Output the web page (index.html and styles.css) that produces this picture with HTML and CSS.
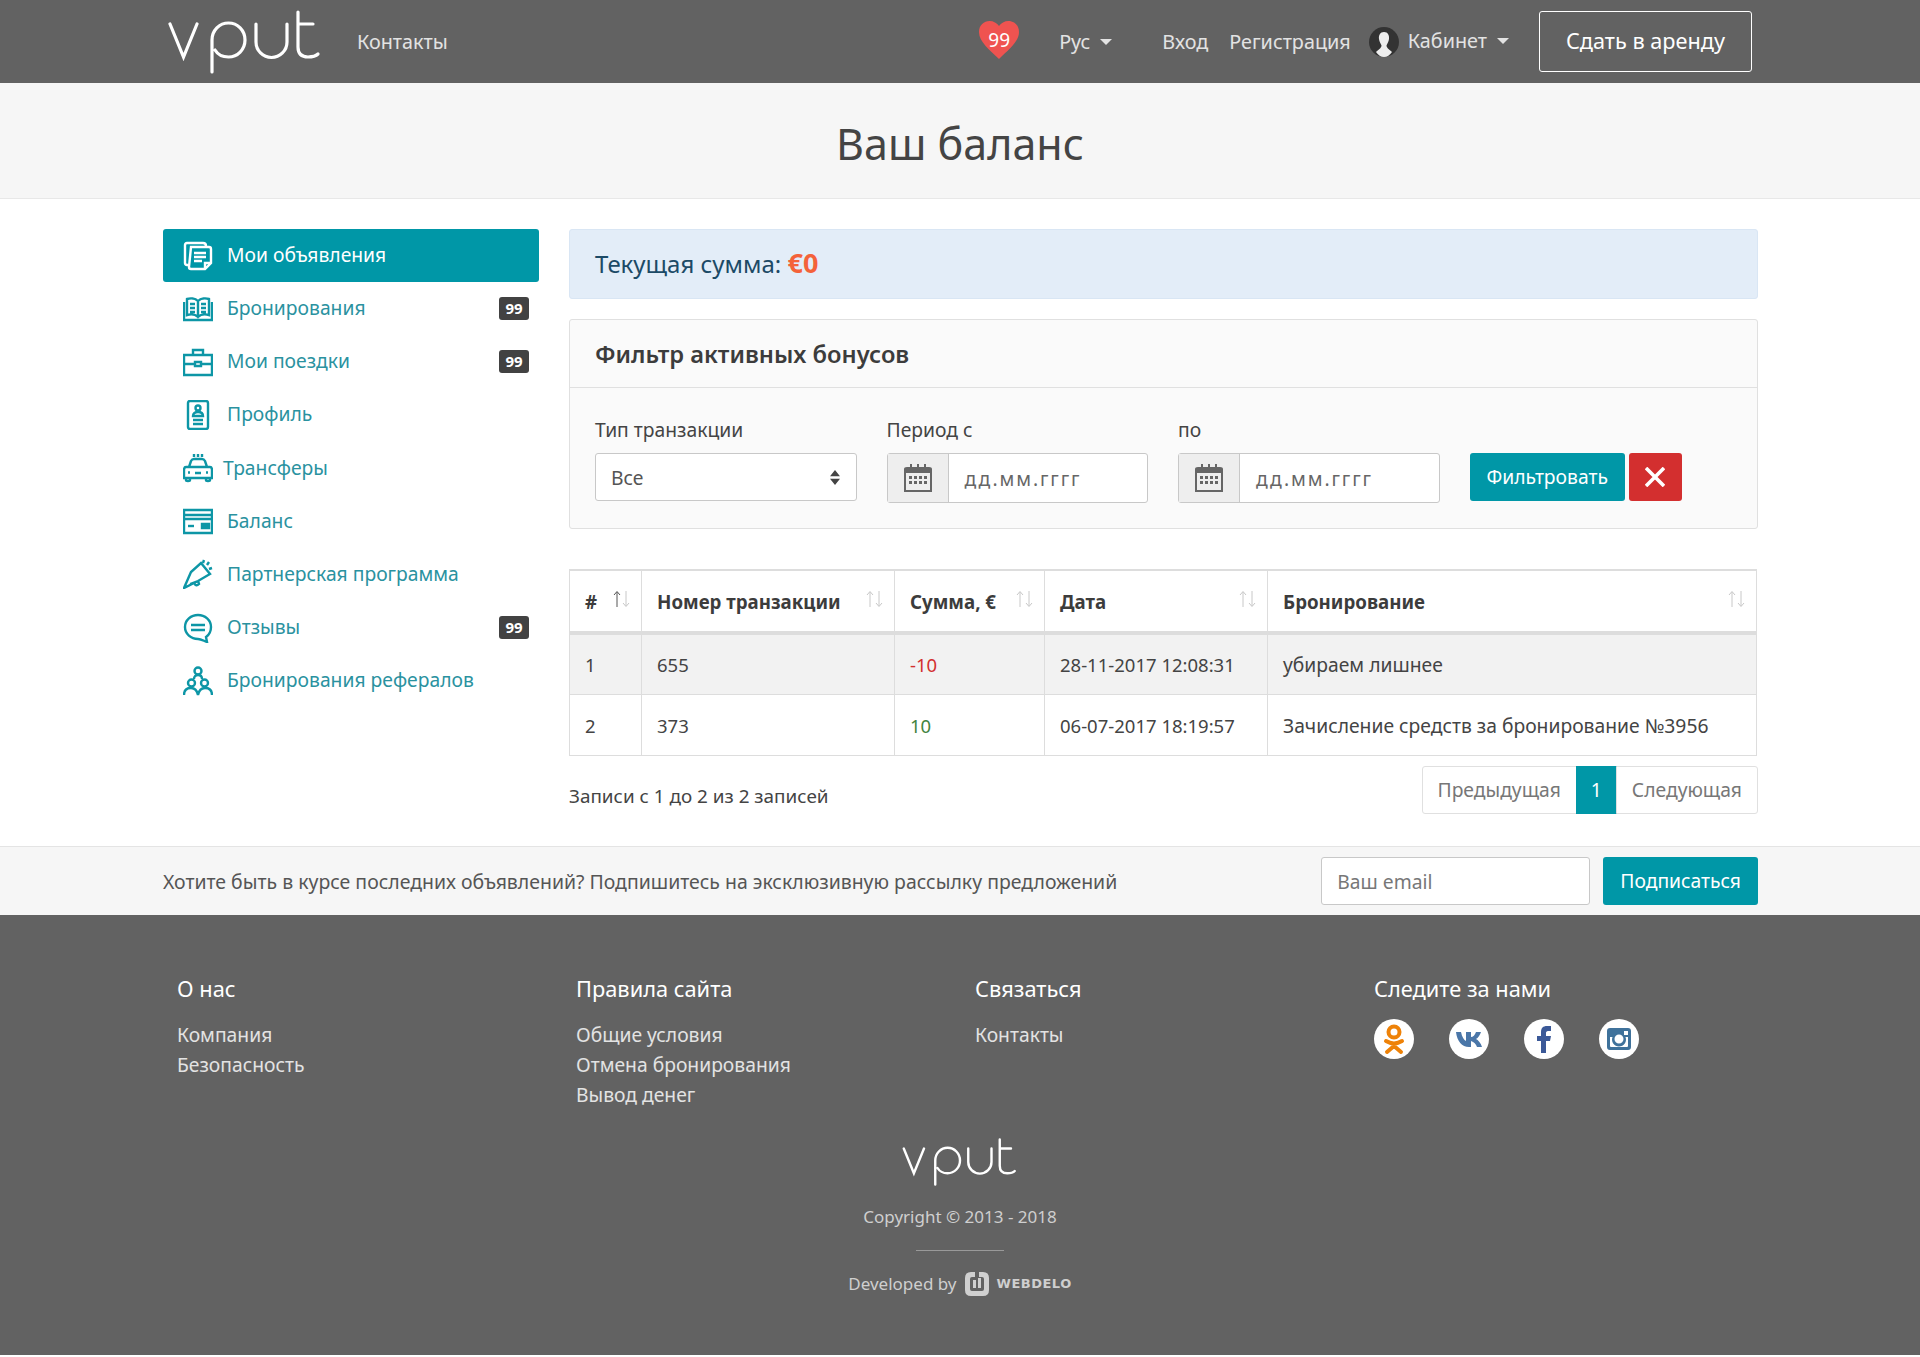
FILE: index.html
```html
<!DOCTYPE html>
<html lang="ru">
<head>
<meta charset="UTF-8">
<title>Ваш баланс</title>
<link rel="stylesheet" href="styles.css">
</head>
<body>

<svg class="sprite" width="0" height="0">
  <symbol id="logo" viewBox="0 0 154 64">
    <g fill="none" stroke="currentColor" stroke-width="3.2" stroke-linecap="round">
      <path d="M2 14 L15.500 47 L29 14"/>
      <path d="M44 62 V30 A16.500 17 0 1 1 60.500 47 C54 47 50 45 47 40"/>
      <path d="M88 14 V32 A15.500 15.500 0 0 0 119 32 V14"/>
      <path d="M130 2 V37 C130 44 134 47 140 47 C144 47 147 47 150 44 M130 14 H145"/>
    </g>
  </symbol>
  <symbol id="cal" viewBox="0 0 30 28">
    <path fill="#666" d="M4 3 H7 V0 H9 V3 H14 V0 H16 V3 H21 V0 H23 V3 H26 Q29 3 29 5 V28 H1 V5 Q1 3 4 3 Z M3 9 V26 H27 V9 Z"/>
    <path fill="#666" d="M6 12 H9 V15 H6 Z M11 12 H14 V15 H11 Z M16 12 H19 V15 H16 Z M21 12 H24 V15 H21 Z M6 17 H9 V20 H6 Z M11 17 H14 V20 H11 Z M16 17 H19 V20 H16 Z M21 17 H24 V20 H21 Z"/>
  </symbol>
  <symbol id="sort" viewBox="0 0 20 18">
    <path class="up" d="M5 17 V2 M2 5 L5 1.500 L8 5" fill="none" stroke="currentColor"/>
    <path d="M14 1 V16 M11 13 L14 16.500 L17 13" fill="none" stroke="#c8c8c8"/>
  </symbol>
</svg>

<header class="topbar">
  <div class="wrap topbar-in">
    <svg class="logo"><use href="#logo"/></svg>
    <a class="nav-link contacts">Контакты</a>
    <div class="heart">
      <svg viewBox="0 0 42 38" width="42" height="38"><path d="M21 38 C12 29 1 21 1 11 C1 4 6 0 11.500 0 C15.500 0 19 2 21 5 C23 2 26.500 0 30.500 0 C36 0 41 4 41 11 C41 21 30 29 21 38 Z" fill="#ef5350"/></svg>
      <span>99</span>
    </div>
    <a class="nav-link lang">Рус<i class="caret"></i></a>
    <a class="nav-link login">Вход</a>
    <a class="nav-link register">Регистрация</a>
    <svg class="avatar" viewBox="0 0 30 30" width="30" height="30">
      <circle cx="15" cy="15" r="15" fill="#333"/>
      <path d="M15 5 C19 5 20.500 8.500 20 12 C19.700 15 18 17 17.500 18.500 C17.500 21 21 23 23 25 C21 28 18 30 15 30 C12 30 9 28 7 25 C9 23 12.500 21 12.500 18.500 C12 17 10.300 15 10 12 C9.500 8.500 11 5 15 5 Z" fill="#eee"/>
    </svg>
    <a class="nav-link cabinet">Кабинет<i class="caret"></i></a>
    <a class="rent-btn">Сдать в аренду</a>
  </div>
</header>

<div class="title-band">
  <h1>Ваш баланс</h1>
</div>

<div class="wrap content">
  <nav class="side">
    <a class="side-item active">
      <svg class="ico" viewBox="0 0 30 30"><path d="M6 24 H4 Q2 24 2 22 V4 Q2 2 4 2 H20 Q23 2 23 5 M8 6 H26 Q28 6 28 8 V22 L22 28 H8 Q6 28 6 26 Z M22 28 V22 H28 M11 12 H23 M11 16 H23 M11 20 H19"/></svg>
      Мои объявления
    </a>
    <a class="side-item">
      <svg class="ico" viewBox="0 0 30 30"><path d="M15 7 C12 4 7 4 4 5 V21 C7 20 12 20 15 23 C18 20 23 20 26 21 V5 C23 4 18 4 15 7 Z M15 7 V23 M1 8 V26 H29 V8 M7 10 H12 M7 14 H12 M7 18 H12 M18 10 H23 M18 14 H23 M18 18 H23"/></svg>
      Бронирования<span class="count">99</span>
    </a>
    <a class="side-item">
      <svg class="ico" viewBox="0 0 30 30"><path d="M1 8 H29 V28 H1 Z M10 8 V3 H20 V8 M1 17 H12 M18 17 H29 M12 15 H18 V19 H12 Z"/></svg>
      Мои поездки<span class="count">99</span>
    </a>
    <a class="side-item">
      <svg class="ico" viewBox="0 0 30 30"><path d="M7 1 H23 Q25 1 25 3 V27 Q25 29 23 29 H7 Q5 29 5 27 V3 Q5 1 7 1 Z M10 16 C10 13 12 12 15 12 C18 12 20 13 20 16 Z M10 20 H20 M10 24 H20"/><circle cx="15" cy="8" r="2.500"/></svg>
      Профиль
    </a>
    <a class="side-item taxi">
      <svg class="ico" viewBox="0 0 30 30"><path d="M6 14 L8 8 Q9 6 11 6 H19 Q21 6 22 8 L24 14 M3 14 H27 Q29 14 29 17 V25 H1 V17 Q1 14 3 14 Z M3 25 V27 Q3 28 5 28 Q7 28 7 27 V25 M23 25 V27 Q23 28 25 28 Q27 28 27 27 V25 M5 19.500 H7 M23 19.500 H25 M12 20 H18 M11 1 V4 M15 1 V4 M19 1 V4"/></svg>
      Трансферы
    </a>
    <a class="side-item">
      <svg class="ico" viewBox="0 0 30 30"><path d="M1 4 H29 V27 H1 Z M1 9 H29 M1 13 H29"/><path class="fill" d="M19 18 H26 V22 H19 Z"/><path d="M5 20 H11"/></svg>
      Баланс
    </a>
    <a class="side-item">
      <svg class="ico" viewBox="0 0 30 30"><path d="M1 29 L8 13 L18 4 L27 15 L15 22 Z M7 25 L15 22 M11 24 Q13 28 16 25 L15 22 M20 4 L21 1 M24 6 L26 3 M26 10 L29 9"/></svg>
      Партнерская программа
    </a>
    <a class="side-item">
      <svg class="ico" viewBox="0 0 30 30"><path d="M15 2 C8 2 2 7 2 14 C2 21 8 26 15 26 C18 26 21 28 24 29 L23 24 C26 22 28 18 28 14 C28 7 22 2 15 2 Z M8 12 H22 M8 17 H22"/></svg>
      Отзывы<span class="count">99</span>
    </a>
    <a class="side-item">
      <svg class="ico" viewBox="0 0 30 30"><circle cx="15" cy="5" r="3.500"/><circle cx="8.500" cy="17" r="3.500"/><circle cx="21.500" cy="17" r="3.500"/><path d="M11 13 C11 10.500 12.500 9 15 9 C17.500 9 19 10.500 19 13 M1 29 C1 24 4 22 8 22 C12 22 14 24 15 29 C16 24 18 22 22 22 C26 22 29 24 29 29"/></svg>
      Бронирования рефералов
    </a>
  </nav>

  <main class="main">
    <div class="sum-box">Текущая сумма: <b>€0</b></div>

    <section class="card">
      <h2 class="card-head">Фильтр активных бонусов</h2>
      <form class="filter">
        <div class="field">
          <label>Тип транзакции</label>
          <div class="select">Все
            <svg viewBox="0 0 8 12" width="10" height="15"><path d="M4 0 L8 5 H0 Z M0 7 H8 L4 12 Z" fill="#444"/></svg>
          </div>
        </div>
        <div class="field">
          <label>Период с</label>
          <div class="date">
            <span class="date-ico"><svg width="30" height="28"><use href="#cal"/></svg></span>
            <span class="date-val">дд.мм.гггг</span>
          </div>
        </div>
        <div class="field">
          <label>по</label>
          <div class="date">
            <span class="date-ico"><svg width="30" height="28"><use href="#cal"/></svg></span>
            <span class="date-val">дд.мм.гггг</span>
          </div>
        </div>
        <div class="filter-btns">
          <a class="btn">Фильтровать</a>
          <a class="btn-x"><svg viewBox="0 0 20 20" width="20" height="20"><path d="M1 1 L19 19 M19 1 L1 19" stroke="#fff" stroke-width="3.600"/></svg></a>
        </div>
      </form>
    </section>

    <table class="tbl">
      <thead>
        <tr>
          <th class="c1"># <svg class="sort active-sort"><use href="#sort"/></svg></th>
          <th class="c2">Номер транзакции <svg class="sort"><use href="#sort"/></svg></th>
          <th class="c3">Сумма, € <svg class="sort"><use href="#sort"/></svg></th>
          <th class="c4">Дата <svg class="sort"><use href="#sort"/></svg></th>
          <th>Бронирование <svg class="sort"><use href="#sort"/></svg></th>
        </tr>
      </thead>
      <tbody>
        <tr class="odd">
          <td class="num">1</td><td class="num">655</td><td class="num minus">-10</td><td class="num">28-11-2017 12:08:31</td><td>убираем лишнее</td>
        </tr>
        <tr>
          <td class="num">2</td><td class="num">373</td><td class="num plus">10</td><td class="num">06-07-2017 18:19:57</td><td>Зачисление средств за бронирование №3956</td>
        </tr>
      </tbody>
    </table>

    <div class="tbl-foot">
      <span class="info">Записи с 1 до 2 из 2 записей</span>
      <div class="pager">
        <a>Предыдущая</a><a class="cur">1</a><a>Следующая</a>
      </div>
    </div>
  </main>
</div>

<div class="subscribe">
  <div class="wrap subscribe-in">
    <span class="sub-text">Хотите быть в курсе последних объявлений? Подпишитесь на эксклюзивную рассылку предложений</span>
    <span class="sub-input">Ваш email</span>
    <a class="btn sub-btn">Подписаться</a>
  </div>
</div>

<footer class="footer">
  <div class="wrap foot-cols">
    <div class="foot-col">
      <h4>О нас</h4>
      <a>Компания</a>
      <a>Безопасность</a>
    </div>
    <div class="foot-col">
      <h4>Правила сайта</h4>
      <a>Общие условия</a>
      <a>Отмена бронирования</a>
      <a>Вывод денег</a>
    </div>
    <div class="foot-col">
      <h4>Связаться</h4>
      <a>Контакты</a>
    </div>
    <div class="foot-col">
      <h4>Следите за нами</h4>
      <div class="socials">
        <svg viewBox="0 0 40 40" width="40" height="40"><circle cx="20" cy="20" r="20" fill="#fff"/><g fill="none" stroke="#ee8208" stroke-width="4" stroke-linecap="round"><circle cx="20" cy="13" r="5.500"/><path d="M12 22 C17 25 23 25 28 22 M20 25 V27 M20 27 L13 33 M20 27 L27 33"/></g></svg>
        <svg viewBox="0 0 40 40" width="40" height="40"><circle cx="20" cy="20" r="20" fill="#fff"/><path fill="#4a76a8" d="M7 13 H12 C13 18 15 21 17 22 V13 H22 V18 C24 18 26 16 27 13 H32 C31 16 29 19 27 20 C29 21 32 24 33 28 H28 C27 25 25 23 22 22 V28 H20 C13 28 8 22 7 13 Z"/></svg>
        <svg viewBox="0 0 40 40" width="40" height="40"><circle cx="20" cy="20" r="20" fill="#fff"/><path fill="#3b5998" d="M17 34 V22 H13 V17 H17 V13 C17 9 19 7 23 7 H27 V12 H24 C22.500 12 22 13 22 14 V17 H27 L26 22 H22 V34 Z"/></svg>
        <svg viewBox="0 0 40 40" width="40" height="40"><circle cx="20" cy="20" r="20" fill="#fff"/><path fill="#3f729b" fill-rule="evenodd" d="M11 9 H29 Q32 9 32 12 V28 Q32 31 29 31 H11 Q8 31 8 28 V12 Q8 9 11 9 Z M11 18 V27 Q11 28 12 28 H28 Q29 28 29 27 V18 H26.500 A7 7 0 1 1 13.500 18 Z M20 15.500 A4.500 4.500 0 1 0 20 24.500 A4.500 4.500 0 1 0 20 15.500 Z M25 12 V16 H29 V12 Z"/></svg>
      </div>
    </div>
  </div>
  <div class="foot-bottom">
    <svg class="logo-small"><use href="#logo"/></svg>
    <div class="copy">Copyright © 2013 - 2018</div>
    <div class="foot-line"></div>
    <div class="dev">Developed by
      <svg viewBox="0 0 26 26" width="26" height="26"><path fill="#d0d0d0" fill-rule="evenodd" d="M7 1 H11 V6 H8 Q6 6 6 8 V18 Q6 20 8 20 H18 Q20 20 20 18 V8 Q20 6 18 6 H15 V1 H19 Q25 1 25 7 V19 Q25 25 19 25 H7 Q1 25 1 19 V7 Q1 1 7 1 Z M9 9 H12 V17 H9 Z M14 7 H17 V17 H14 Z"/></svg>
      <b>WEBDELO</b>
    </div>
  </div>
</footer>

</body>
</html>
```

FILE: styles.css
```css
* {
  box-sizing: border-box;
}

body {
  margin: 0;
  font-family: "Noto Sans", sans-serif;
  font-size: 19.3px;
  line-height: 25px;
  color: #444;
  background: #fff;
}

.sprite {
  position: absolute;
}

.wrap {
  width: 1595px;
  margin: 0 0 0 163px;
}

/* шапка */
.topbar {
  height: 83px;
  background: #626262;
}

.topbar-in {
  display: flex;
  align-items: center;
  height: 83px;
}

.logo {
  flex: none;
  width: 154px;
  height: 64px;
  margin: 0 0 0 5px;
  color: #fff;
}

.nav-link {
  color: #e3e3e3;
  font-size: 19.8px;
  white-space: nowrap;
}

.contacts {
  margin-left: 35px;
}

.heart {
  position: relative;
  width: 42px;
  height: 38px;
  margin: -4px 0 0 auto;
}

.heart span {
  position: absolute;
  left: 0;
  right: 0;
  top: 7px;
  text-align: center;
  color: #fff;
  font-size: 19px;
}

.lang {
  margin-left: 39px;
}

.caret {
  display: inline-block;
  margin-left: 10px;
  vertical-align: 4px;
  border-top: 6px solid #e3e3e3;
  border-left: 6px solid transparent;
  border-right: 6px solid transparent;
}

.login {
  margin-left: 50px;
}

.register {
  margin-left: 21px;
}

.avatar {
  margin-left: 18px;
}

.cabinet {
  margin: -3px 0 0 9px;
}

.rent-btn {
  margin: 0 6px 0 30px;
  width: 213px;
  height: 61px;
  line-height: 58px;
  text-align: center;
  border: 1px solid #fff;
  border-radius: 3px;
  color: #fff;
  font-size: 21.7px;
  white-space: nowrap;
}

.title-band {
  height: 116px;
  background: #f6f6f6;
  border-bottom: 1px solid #e8e8e8;
}

h1 {
  margin: 0;
  text-align: center;
  font-size: 43px;
  font-weight: 400;
  line-height: 121px;
  color: #444;
}

/* боковое меню */
.content {
  display: flex;
  gap: 30px;
  padding-top: 30px;
}

.side {
  flex: 0 0 376px;
}

.side-item {
  display: flex;
  align-items: center;
  height: 53.150px;
  padding: 0 10px 2px 20px;
  color: #2a929f;
  white-space: nowrap;
}

.side-item.active {
  background: #0097a7;
  border-radius: 3px;
  color: #fff;
}

.ico {
  flex: none;
  width: 30px;
  height: 30px;
  margin: 2px 14px 0 0;
  fill: none;
  stroke: #0d96a6;
  stroke-width: 2.400;
}

.active .ico {
  stroke: #fff;
}

.ico .fill {
  fill: #0d96a6;
}

.taxi .ico {
  margin-right: 10px;
}

.count {
  margin: 2px 0 0 auto;
  width: 30px;
  height: 23px;
  border-radius: 3px;
  background: #424242;
  color: #fff;
  font-size: 15px;
  font-weight: 700;
  line-height: 23px;
  text-align: center;
}

/* основная колонка */
.main {
  flex: 1;
  min-width: 0;
}

.sum-box {
  height: 70px;
  padding: 0 25px;
  background: #e3edf8;
  border: 1px solid #d9e6f4;
  border-radius: 3px;
  font-size: 24px;
  line-height: 66px;
  color: #1c4a66;
}

.sum-box b {
  font-size: 27px;
  color: #f4623a;
}

.card {
  margin-top: 20px;
  height: 210px;
  background: #fafafa;
  border: 1px solid #e0e0e0;
  border-radius: 3px;
}

.card-head {
  margin: 0;
  height: 68px;
  padding: 0 25px;
  border-bottom: 1px solid #e0e0e0;
  font-size: 23.700px;
  font-weight: 600;
  line-height: 68px;
  color: #3c3c3c;
}

.filter {
  display: flex;
  align-items: flex-start;
  gap: 30px;
  padding: 28px 25px 0;
}

.field {
  width: 261.500px;
}

.field label {
  display: block;
  height: 37px;
  line-height: 27px;
}

.select {
  display: flex;
  align-items: center;
  justify-content: space-between;
  height: 48px;
  padding: 0 16px 0 15px;
  background: #fff;
  border: 1px solid #c8c8c8;
  border-radius: 3px;
  color: #555;
}

.date {
  display: flex;
  height: 50px;
  background: #fff;
  border: 1px solid #c8c8c8;
  border-radius: 3px;
}

.date-ico {
  display: flex;
  align-items: center;
  justify-content: center;
  width: 61px;
  background: #eee;
  border-right: 1px solid #c8c8c8;
}

.date-val {
  padding-left: 16px;
  line-height: 50px;
  color: #666;
  letter-spacing: 1.900px;
}

.filter-btns {
  display: flex;
  gap: 4px;
  padding-top: 37px;
}

.btn {
  display: block;
  padding: 0 17px;
  height: 48px;
  background: #0097a7;
  border-radius: 3px;
  color: #fff;
  line-height: 48px;
  white-space: nowrap;
}

.btn-x {
  display: flex;
  align-items: center;
  justify-content: center;
  width: 53px;
  height: 48px;
  background: #d32f2f;
  border-radius: 3px;
}

/* таблица */
.tbl {
  width: calc(100% - 1px);
  margin-top: 40px;
  border-collapse: collapse;
  table-layout: fixed;
  border-top: 2px solid #ddd;
}

.tbl th,
.tbl td {
  border: 1px solid #ddd;
  padding: 0 15px;
  text-align: left;
  font-weight: 400;
}

.tbl th {
  position: relative;
  height: 63px;
  border-bottom: 4px solid #ddd;
  font-size: 18.700px;
  font-weight: 700;
  color: #3c3c3c;
}

.tbl td {
  height: 61px;
  padding-top: 1px;
  color: #444;
}

.tbl .num {
  font-size: 18.500px;
}

.c1 {
  width: 72px;
}

.c2 {
  width: 253px;
}

.c3 {
  width: 150px;
}

.c4 {
  width: 223px;
}

.odd td {
  background: #f2f2f2;
}

.minus {
  color: #d32f2f !important;
}

.plus {
  color: #43843f !important;
}

.sort {
  position: absolute;
  right: 9px;
  top: 19px;
  width: 20px;
  height: 18px;
  color: #c8c8c8;
}

.active-sort {
  color: #555;
}

.tbl-foot {
  display: flex;
  align-items: center;
  justify-content: space-between;
  margin-top: 10px;
}

.info {
  padding-top: 13px;
  font-size: 18.900px;
}

.pager {
  display: flex;
  height: 48px;
  line-height: 46px;
  color: #777;
}

.pager a {
  padding: 0 15px;
  border: 1px solid #e0e0e0;
  margin-left: -1px;
}

.pager a:first-child {
  border-radius: 3px 0 0 3px;
}

.pager a:last-child {
  border-radius: 0 3px 3px 0;
}

.pager .cur {
  padding: 0 14px;
  background: #0097a7;
  border-color: #0097a7;
  color: #fff;
}

/* подписка */
.subscribe {
  margin-top: 32px;
  height: 69px;
  background: #f6f6f6;
  border-top: 1px solid #e4e4e4;
}

.subscribe-in {
  display: flex;
  align-items: center;
  height: 68px;
}

.sub-text {
  flex: 1;
  padding-top: 1px;
  font-size: 19.450px;
  color: #555;
}

.sub-input {
  width: 269px;
  height: 48px;
  padding-left: 15px;
  background: #fff;
  border: 1px solid #c8c8c8;
  border-radius: 3px;
  line-height: 48px;
  color: #777;
}

.sub-btn {
  margin-left: 13px;
}

/* подвал */
.footer {
  height: 440px;
  background: #626262;
  color: #e3e3e3;
}

.foot-cols {
  display: flex;
  height: 223px;
  padding: 59px 15px 0 14px;
}

.foot-col {
  flex: none;
  width: 399px;
}

.foot-col h4 {
  margin: 0 0 16px;
  font-size: 21.800px;
  font-weight: 400;
  line-height: 30px;
  color: #fff;
}

.foot-col a {
  display: block;
  line-height: 30px;
}

.socials {
  display: flex;
  gap: 35px;
  margin-top: -1px;
}

.foot-bottom {
  display: flex;
  flex-direction: column;
  align-items: center;
}

.logo-small {
  width: 116px;
  height: 48px;
  color: #fff;
}

.copy {
  margin-top: 18px;
  font-size: 17px;
  color: #cfcfcf;
}

.foot-line {
  width: 88px;
  margin-top: 21px;
  border-top: 1px solid #999;
}

.dev {
  display: flex;
  align-items: center;
  gap: 7px;
  margin-top: 20px;
  font-size: 17px;
  color: #cfcfcf;
}

.dev b {
  font-family: "DejaVu Sans", sans-serif;
  font-size: 13px;
  letter-spacing: .5px;
}
```
